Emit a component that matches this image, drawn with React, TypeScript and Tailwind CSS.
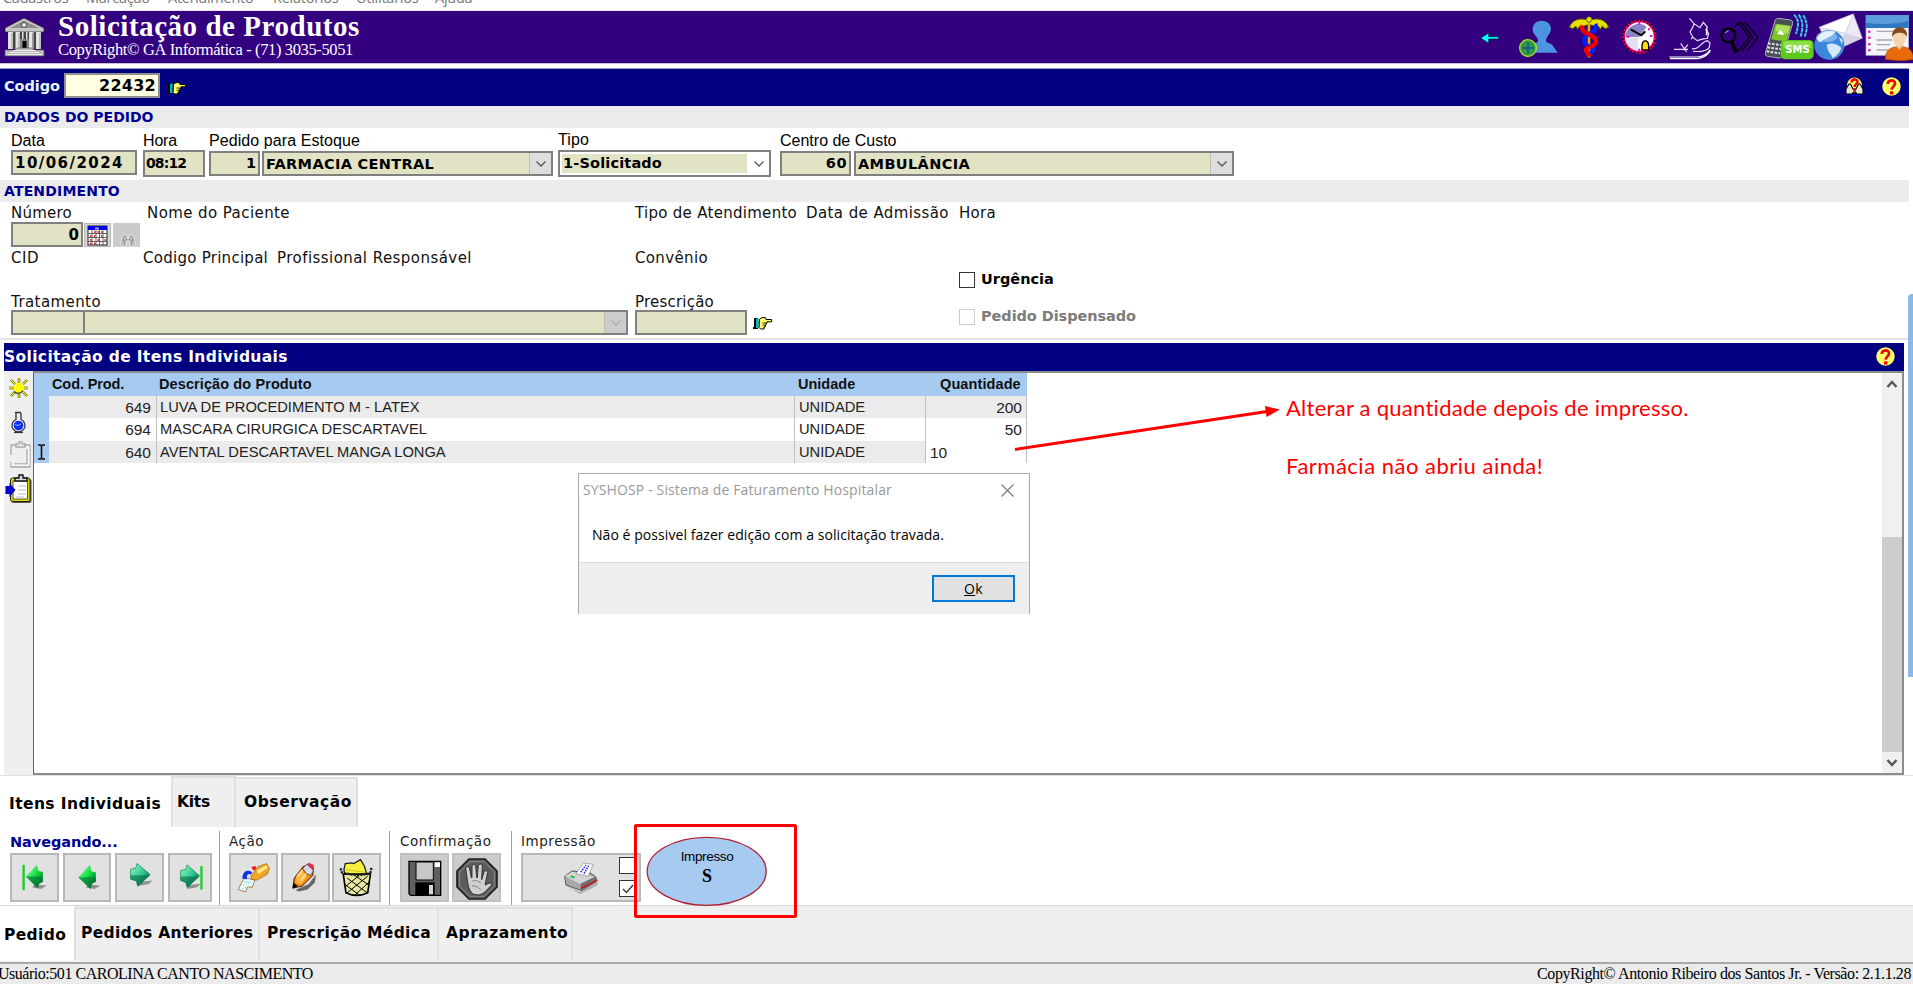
import type { ReactNode } from "react";

function T({ c = "", children }: { c?: string; children: ReactNode }) {
  return <span className={`block w-fit whitespace-nowrap ${c}`}>{children}</span>;
}

const V = "font-['DejaVu_Sans',sans-serif]";
const A = "font-['Liberation_Sans',sans-serif]";
const S = "font-['Liberation_Serif',serif]";

function Chevron({ c = "#555" }: { c?: string }) {
  return (
    <svg width="12" height="8" viewBox="0 0 12 8" fill="none" stroke={c} strokeWidth="1.3">
      <path d="M1.5 1.5 6 6l4.5-4.5" />
    </svg>
  );
}

function Help() {
  return (
    <svg width="19" height="19" viewBox="0 0 19 19">
      <circle cx="9.5" cy="9.5" r="9.2" fill="#ffff66" />
      <path d="M5.800 7C5.800 2.200 13.200 2.400 13 6.600c-.1 2.600-3.200 2.900-3.300 6" fill="none" stroke="#f00000" strokeWidth="2.600" />
      <rect x="8" y="14.300" width="3.400" height="3.200" fill="#f00000" />
    </svg>
  );
}

function HandPoint() {
  return (
    <svg width="20" height="13" viewBox="0 0 20 13">
      <path d="M1 1h4v11H0V10h1z" fill="#000" />
      <path d="M3 1.500h2.600v9.500H3z" fill="#00b8b8" />
      <path d="M6.500 2.200 9 .6h3.400l.6 1.900h5.600v2.300H14v1.400h-1v1.900h-.8V10H11v2H7.500L6 10.400z" fill="#ffff66" stroke="#000" strokeWidth="1" />
      <path d="M9.500 6h3.500M9.500 8.200h2.500" stroke="#000" strokeWidth=".8" />
    </svg>
  );
}

function Building() {
  return (
    <svg width="41" height="40" viewBox="0 0 41 40">
      <path d="M20 1 40 11v4H1v-4z" fill="#c8c8c8" stroke="#222" strokeWidth=".7" />
      <path d="M20 3.500 35 11H6z" fill="#8f8f8f" />
      <circle cx="20" cy="8" r="2.500" fill="#eee" stroke="#444" />
      <path d="M4 15h33v17H4z" fill="#444" />
      <path d="M4 15h5v17H4zM11.500 15h4.500v17h-4.500zM18 15h1.500v8H18zM22 15h1.500v8H22zM25 15h4.500v17H25zM32 15h5v17h-5z" fill="#e4e4e4" />
      <path d="M8 16v16M15 16v16M28.500 16v16M36 16v16" stroke="#999" />
      <path d="M16 22h9v10h-9z" fill="#888" />
      <path d="M18.500 24h4v9h-4z" fill="#000" />
      <path d="M1 33h10l2-2h15l2 2h10v6H1z" fill="#bdbdbd" stroke="#555" strokeWidth=".6" />
      <path d="M9 33.500h23M6 35.500h29M3 37.500h35" stroke="#f0f0f0" strokeWidth=".9" />
    </svg>
  );
}

function HeaderIcons() {
  return (
    <div className="flex h-[52px]">
      <svg width="35" height="52" viewBox="120 33 105 156">
        <path d="M122 114l24-15v11h30v7h-30v13z" fill="#00ffff" stroke="#002040" strokeWidth="2" />
      </svg>
      <svg width="51" height="52" viewBox="225 33 153 156">
        <path d="M278 88c0-34 55-34 55 0 0 8-5 12-8 18-5 8-8 12-6 20 8 4 16 4 20 12l14 20h-93c2-18 16-26 34-32 2-8-3-12-8-20-6-6-8-10-8-18z" fill="#4c94e0" />
        <circle cx="264" cy="144" r="25" fill="#2f9a44" stroke="#b4e61e" strokeWidth="4" />
        <path d="M264 127v34M247 144h34" stroke="#1c4fa0" strokeWidth="5" />
      </svg>
      <svg width="52" height="52" viewBox="378 33 156 156">
        <path d="M388 82c8-22 30-30 54-22l5 14c-14 2-18 4-20 14l-8-10-6 10-6-10-8 8z" fill="#e8e000" stroke="#5a5a00" strokeWidth="3" />
        <path d="M506 82c-8-22-30-30-54-22l-5 14c14 2 18 4 20 14l8-10 6 10 6-10 8 8z" fill="#e8e000" stroke="#5a5a00" strokeWidth="3" />
        <path d="M447 52v120" stroke="#d8b000" strokeWidth="8" />
        <path d="M466 72c14 24-38 30-34 52 2 16 30 14 28 26-2 8-16 6-13 18" fill="none" stroke="#0020ff" strokeWidth="12" />
        <path d="M428 76c-12 28 44 26 40 50-2 14-30 14-30 24 0 6 8 8 9 20" fill="none" stroke="#f00000" strokeWidth="13" />
        <circle cx="447" cy="58" r="8" fill="#e8e000" stroke="#5a5a00" strokeWidth="2" />
      </svg>
      <svg width="48" height="52" viewBox="534 33 144 156">
        <circle cx="598" cy="110" r="47" fill="#fff" stroke="#e8005c" strokeWidth="8" />
        <circle cx="598" cy="110" r="49" fill="none" stroke="#200020" strokeWidth="5" strokeDasharray="5 6" />
        <path d="M556 112a40 40 0 0 1 64-32l-20 30z" fill="#8c84c8" />
        <path d="M556 118a42 42 0 0 0 36 34l4-42z" fill="#e4e0f4" />
        <path d="M572 88l32 18 12-12" fill="none" stroke="#000" strokeWidth="6" />
        <path d="M598 66v8M560 110h8M598 146v7M630 108h7M624 88h6" stroke="#f000f0" strokeWidth="6" />
        <path d="M606 150v-14c2-18 18-18 20 0v14z" fill="#ffe000" stroke="#000" strokeWidth="4" />
      </svg>
      <svg width="52" height="52" viewBox="678 33 156 156" fill="none" stroke="#e8e0f0" strokeWidth="3.500">
        <path d="M748 55l14 16 18 12 10-16 12 14-4 8 8 12-4 14-12 2M762 72l-6 14-6 10 8 14-4 8M758 112l14 10 20-6M702 148h42M722 130l18 26M744 134l-14 16M756 146c20 6 26-20 46-24l8 6-2 14c-8 12-24 14-48 12" />
        <path d="M688 171h84c16-1 32-10 38-22M690 176h84c18-2 34-14 37-26" stroke="#fff" />
        <path d="M800 86v20" strokeWidth="5" stroke="#fff" />
      </svg>
      <svg width="44" height="52" viewBox="834 33 132 156" fill="none" stroke="#000" strokeWidth="3.500">
        <path d="M884 82l10-14 34 44-34 42-16-18M896 66l10 4 32 42-32 40M912 70l10 4 32 38-32 40" />
        <circle cx="865" cy="106" r="21" strokeWidth="7" />
        <path d="M876 126l12 32" strokeWidth="11" />
        <path d="M856 98l10-6" stroke="#c8c0e8" strokeWidth="3" />
      </svg>
      <svg width="51" height="52" viewBox="966 33 153 156" className="overflow-visible">
        <path d="M1006 60q3-6 10-5l36 5q8 2 6 10l-18 62-12 36q-4 7-12 6l-34-5q-8-2-6-10z" fill="#4a4f55" stroke="#a8b0b8" strokeWidth="3" />
        <path d="M1007 71l46 6-13 48-46-7z" fill="#7cc62c" />
        <path d="M1010 74l40 5-5 20q-20 4-40-8z" fill="#aee058" />
        <path d="M1010 102l12-12 12 15z" fill="#fff" />
        <path d="M984 130l44 6M982 142l42 6M980 154l40 6" stroke="#e0e4e8" strokeWidth="6" strokeDasharray="8 4" />
        <path d="M1062 44c18 18 12 36 6 58M1076 44c16 22 12 42 6 66M1090 46c14 24 12 42 4 64" fill="none" stroke="#38c8f0" strokeWidth="6" strokeDasharray="12 2" />
        <rect x="1022" y="120" width="99" height="58" rx="14" fill="#5cc81e" />
        <path d="M1030 124h84v20q-42 10-84 0z" fill="#8ce04c" />
        <text x="1036" y="160" textLength="73" fontSize="30" fontWeight="bold" fill="#fff" fontFamily="DejaVu Sans">SMS</text>
      </svg>
      <svg width="51" height="52" viewBox="1119 33 153 156">
        <path d="M1138 82l102-40 27 72-92 42z" fill="#eceaf4" stroke="#b8b4cc" strokeWidth="2" />
        <path d="M1138 82l78 18 24-58z" fill="#fff" stroke="#c0bcd4" strokeWidth="2" />
        <path d="M1267 114l-52-14-38 54z" fill="#d8d4e6" />
        <circle cx="1168" cy="135" r="45" fill="#3c86dc" />
        <path d="M1130 116c10-22 40-30 58-20-10 6-12 14-24 16-4 8-16 4-20 14-6 2-10-4-14-10zM1160 134c16-8 36 0 44 10-4 14-14 24-26 30-4-12-16-18-18-40zM1196 110l12 10-2 14z" fill="#d4e8fc" />
        <ellipse cx="1160" cy="110" rx="32" ry="16" fill="#fff" opacity=".35" />
      </svg>
      <svg width="49" height="52" viewBox="1272 33 147 156">
        <rect x="1278" y="46" width="128" height="120" fill="#f4f6fa" stroke="#9cb4d0" strokeWidth="2" />
        <rect x="1278" y="46" width="128" height="38" fill="#2f78c4" />
        <path d="M1278 46h128v16q-60 16-128 6z" fill="#5c9cdc" />
        <path d="M1310 94h60M1310 120h46M1310 134h40M1310 150h36" stroke="#a8a8b0" strokeWidth="4" />
        <path d="M1288 92v6M1288 110v6M1288 130v6M1288 148v6" stroke="#d800b0" strokeWidth="7" />
        <path d="M1336 178c0-30 18-38 44-38s40 10 40 38q-42 8-84 0z" fill="#e86c0c" stroke="#a84400" strokeWidth="2" />
        <path d="M1366 134l12 16 14-16z" fill="#f0c8a0" />
        <ellipse cx="1378" cy="114" rx="19" ry="25" fill="#f6d4b0" />
        <path d="M1357 112c-6-40 50-40 44 0-4-12-14-14-22-14s-18 2-22 14z" fill="#8a4a20" />
      </svg>
    </div>
  );
}

const beige = "bg-[#e2e2c4] border-2 border-[#808080]";

function Menu() {
  const m = "text-[#777] text-[14.500px] leading-[20px] tracking-[-0.260px] font-['Open_Sans',sans-serif]";
  return (
    <div className="flex h-[11px] overflow-hidden border-b border-[#e8e8e8] bg-white">
      <div className="-mt-[12px] flex h-[20px] pl-[3px]">
        <div className="w-[83px]"><T c={m}>Cadastros</T></div>
        <div className="w-[82px]"><T c={m}>Marcação</T></div>
        <div className="w-[105px]"><T c={m}>Atendimento</T></div>
        <div className="w-[83px]"><T c={m}>Relatórios</T></div>
        <div className="w-[79px]"><T c={m}>Utilitários</T></div>
        <T c={m}>Ajuda</T>
      </div>
    </div>
  );
}

function Header() {
  return (
    <>
      <div className="flex h-[53px] justify-between border-b border-[#c8c0d8] bg-[#330080]">
        <div className="flex pl-[4px]">
          <div className="pt-[6px]"><Building /></div>
          <div className="flex flex-col pt-[1px] pl-[13px] text-white">
            <T c={`${S} font-bold text-[29px] leading-[28px] tracking-[0.540px]`}>Solicitação de Produtos</T>
            <T c={`${S} text-[16.500px] leading-[20px] tracking-[-0.380px]`}>CopyRight© GÁ Informática - (71) 3035-5051</T>
          </div>
        </div>
        <HeaderIcons />
      </div>
      <div className="mt-[4px] flex h-[38px] w-[1909px] items-start border-t border-[#a0a0c8] bg-[#000080]">
        <T c={`${V} ml-[4px] mt-[7px] w-[56px] font-bold text-[14.500px] leading-[20px] tracking-[-0.050px] text-[#e8f4ff]`}>Codigo</T>
        <div className="ml-[4px] mt-[4px] flex h-[25px] w-[96px] justify-end border-2 border-[#909090] bg-[#ffffe1] pr-[2px]">
          <T c={`${V} font-bold text-[16px] leading-[21px] tracking-[0.270px]`}>22432</T>
        </div>
        <div className="ml-[7px] mt-[13px]"><HandPoint /></div>
        <div className="ml-auto mt-[8px] flex gap-[18px] pr-[8px]">
          <svg width="19" height="19" viewBox="0 0 19 19">
            <circle cx="9.5" cy="8" r="7.500" fill="#ffff66" />
            <path d="M1 17v-5l3-5 1.500 0 2.500 5h3l2.500-5H15l3 5v5h-6l-1.500-2h-2L7 17z" fill="#e8e8d0" stroke="#000" strokeWidth="1.100" />
            <path d="M2 18.500h15" stroke="#0000e0" />
            <path d="M6.500 5.500C6.500 1.500 12.500 1.500 12.500 5c0 2-2.800 2-2.800 5" fill="none" stroke="#f00000" strokeWidth="2.400" />
            <rect x="8.300" y="11.500" width="2.800" height="2.600" fill="#f00000" />
          </svg>
          <Help />
        </div>
      </div>
    </>
  );
}

const ms = `${A} text-[16px] leading-[22px] text-black`;
const vd = `${V} text-[15px] leading-[23px] text-[#111]`;

function Combo({ c, btn, ch, children }: { c: string; btn: string; ch?: string; children?: ReactNode }) {
  return (
    <div className={`flex justify-between ${beige} ${c}`}>
      <div>{children}</div>
      <div className={`flex w-[22px] items-center justify-center border-l border-[#c0c0b0] ${btn}`}><Chevron c={ch} /></div>
    </div>
  );
}

const fb = `${V} font-bold text-[14.500px]`;

function Dados() {
  return (
    <div className="w-[1909px]">
      <div className="h-[22px] bg-[#ebebeb] pl-[4px]">
        <T c={`${V} font-bold text-[14px] leading-[23px] text-[#000090]`}>DADOS DO PEDIDO</T>
      </div>
      <div className="flex h-[52px] pt-[2px] pl-[11px]">
        <div className="flex w-[126px] flex-col">
          <div className="h-[20px]"><T c={ms}>Data</T></div>
          <div className={`h-[25px] pl-[2px] ${beige}`}><T c={`${V} font-bold text-[15px] leading-[22px] tracking-[1.450px]`}>10/06/2024</T></div>
        </div>
        <div className="ml-[6px] flex w-[62px] flex-col">
          <div className="h-[20px]"><T c={`${ms} tracking-[-0.170px]`}>Hora</T></div>
          <div className={`h-[27px] pl-[1px] ${beige}`}><T c={`${V} font-bold text-[14px] leading-[22px] tracking-[-0.900px]`}>08:12</T></div>
        </div>
        <div className="ml-[4px] flex w-[344px] flex-col">
          <div className="h-[21px]"><T c={`${ms} tracking-[0.080px]`}>Pedido para Estoque</T></div>
          <div className="flex gap-[2px]">
            <div className={`flex h-[25px] w-[51px] justify-end pr-[2px] ${beige}`}><T c={`${fb} leading-[21px]`}>1</T></div>
            <Combo c="h-[25px] w-[291px] pl-[2px]" btn="bg-[#dedede]"><T c={`${fb} leading-[23px] tracking-[0.330px]`}>FARMACIA CENTRAL</T></Combo>
          </div>
        </div>
        <div className="ml-[5px] flex w-[213px] flex-col">
          <div className="h-[20px]"><T c={`${ms} -mt-px tracking-[0.120px]`}>Tipo</T></div>
          <div className="flex h-[27px] justify-between border-2 border-[#808080] bg-white py-[2px] pl-[2px] pr-[4px]">
            <div className="flex w-[185px] bg-[#e2e2c4] pl-px"><T c={`${fb} leading-[18px] tracking-[0.160px]`}>1-Solicitado</T></div>
            <div className="flex items-center"><Chevron /></div>
          </div>
        </div>
        <div className="ml-[9px] flex w-[454px] flex-col">
          <div className="h-[21px]"><T c={ms}>Centro de Custo</T></div>
          <div className="flex gap-[3px]">
            <div className={`flex h-[25px] w-[71px] justify-end pr-[2px] ${beige}`}><T c={`${fb} leading-[21px] tracking-[0.500px]`}>60</T></div>
            <Combo c="h-[25px] w-[380px] pl-[2px]" btn="bg-[#dedede]"><T c={`${fb} leading-[23px] tracking-[0.370px]`}>AMBULÂNCIA</T></Combo>
          </div>
        </div>
      </div>
    </div>
  );
}

function Calendar() {
  return (
    <svg width="27" height="24" viewBox="0 0 27 24">
      <rect x=".5" y=".5" width="26" height="23" fill="#d4d4d4" stroke="#b8b8b8" />
      <rect x="4" y="3" width="19" height="19" fill="#fff" stroke="#222" />
      <rect x="4" y="3" width="19" height="4" fill="#0000e8" />
      <rect x="11" y="4.500" width="4" height="2" fill="#aaa" />
      <path d="M4 10.500h19M4 14.500h19M4 18.500h19M8 7v15M12 7v15M15.500 7v15M19 7v15" stroke="#444" strokeWidth=".8" />
      <path d="M10 9h1.500M13.500 9H15M17 9h1.500M6 13h1.500M10 13h1.500M17 13h1.500M6 17h1.500M13.500 17H15M20.500 17H22M6 20.500h1.500M10 20.500h1.500" stroke="#e00000" strokeWidth="1.700" />
    </svg>
  );
}

function Binoculars() {
  return (
    <svg width="27" height="24" viewBox="0 0 27 24">
      <rect width="27" height="24" fill="#cbcbcb" />
      <path d="M8 23v-5l2.500-6h3l1 4h1l1-4h3l2.500 6v5h-5v-5h-4v5z" fill="#9a9a9a" stroke="#f4f4f4" strokeWidth=".8" />
      <path d="M10 18v4M12 14v3M18 14v3M20 18v4" stroke="#e8e8e8" />
    </svg>
  );
}

function Atendimento() {
  return (
    <div className="w-[1909px]">
      <div className="h-[22px] bg-[#ebebeb] pl-[4px]">
        <T c={`${V} font-bold text-[14px] leading-[23px] tracking-[0.170px] text-[#000090]`}>ATENDIMENTO</T>
      </div>
      <div className="flex h-[136px] pl-[11px]">
        <div className="flex w-[948px] flex-col">
          <div className="flex h-[20px]">
            <div className="w-[136px]"><T c={`${vd} tracking-[0.230px]`}>Número</T></div>
            <div className="w-[488px]"><T c={`${vd} tracking-[0.420px]`}>Nome do Paciente</T></div>
            <div className="w-[171px]"><T c={`${vd} tracking-[0.290px]`}>Tipo de Atendimento</T></div>
            <T c={`${vd} tracking-[0.410px]`}>Data de Admissão</T>
          </div>
          <div className="flex h-[25px]">
            <div className={`flex w-[72px] justify-end pr-[2px] ${beige}`}><T c={`${V} font-bold text-[15px] leading-[22px]`}>0</T></div>
            <div className="ml-px mt-px"><Calendar /></div>
            <div className="ml-[2px] mt-px"><Binoculars /></div>
          </div>
          <div className="flex h-[44px]">
            <div className="w-[132px]"><T c={`${vd} tracking-[0.500px]`}>CID</T></div>
            <div className="w-[134px]"><T c={`${vd} tracking-[0.270px]`}>Codigo Principal</T></div>
            <div className="w-[358px]"><T c={`${vd} tracking-[0.450px]`}>Profissional Responsável</T></div>
            <T c={`${vd} tracking-[0.360px]`}>Convênio</T>
          </div>
          <div className="flex h-[19px]">
            <div className="w-[624px]"><T c={`${vd} tracking-[0.420px]`}>Tratamento</T></div>
            <T c={`${vd} tracking-[0.210px]`}>Prescrição</T>
          </div>
          <div className="flex h-[25px]">
            <div className={`w-[73px] ${beige} border-r-[1px]`} />
            <Combo c="w-[544px] border-l-[1px]" btn="bg-[#cdcdcd]" ch="#aaa" />
            <div className={`ml-[7px] w-[112px] ${beige}`} />
            <div className="ml-[6px] mt-[7px]"><HandPoint /></div>
          </div>
        </div>
        <div className="flex flex-col">
          <T c={`${vd} tracking-[0.300px]`}>Hora</T>
          <div className="mt-[43px] flex items-center gap-[6px]">
            <div className="h-[16px] w-[16px] border-[1.500px] border-[#333] bg-white" />
            <T c={`${V} font-bold text-[14.500px] leading-[23px]`}>Urgência</T>
          </div>
          <div className="mt-[14px] flex items-center gap-[6px]">
            <div className="h-[16px] w-[16px] border-[1.500px] border-[#ccc] bg-white" />
            <T c={`${V} font-bold text-[14.500px] leading-[23px] tracking-[-0.070px] text-[#7c7c7c]`}>Pedido Dispensado</T>
          </div>
        </div>
      </div>
    </div>
  );
}

function SideTools() {
  return (
    <div className="flex w-[29px] flex-col bg-[#efefef]">
      <svg width="29" height="140" viewBox="4 371 29 140">
        <path d="M19 378v6M19 392v6M9 388h5M24 388h4M11 380l4 4M27 380l-4 4M11 396l4-4M27 396l-4-4" stroke="#222" strokeWidth="2.400" />
        <path d="M19 378v6M19 392v6M9 388h5M24 388h4M11 380l4 4M27 380l-4 4M11 396l4-4M27 396l-4-4" stroke="#ffff00" strokeWidth="1.300" />
        <circle cx="19" cy="388" r="5.200" fill="#ffff00" />
        <path d="M14 391.500q5 4 9-1" fill="none" stroke="#333" strokeWidth="1.200" />
        <path d="M15 412.500h6M16 413v6.500a6.500 6.500 0 1 0 5 0V413" fill="#e8f0ff" stroke="#333" strokeWidth="1.300" />
        <circle cx="18.500" cy="425.500" r="4.800" fill="#1030f0" />
        <path d="M15 424.500l3 1 3-1.500" stroke="#80c0ff" fill="none" />
        <path d="M14 432.500h9" stroke="#333" strokeWidth="1.200" />
        <path d="M16 445h-5v10M11 462v5h19v-22h-6M16 447v-3h3v-2h3v2h3v3zM14 464h13v-15" fill="none" stroke="#aaa" strokeWidth="1.300" />
        <path d="M12 463v3M29 446v19H13" stroke="#fff" fill="none" />
        <rect x="11.500" y="479" width="20" height="24" rx="2" fill="#555" />
        <rect x="10.500" y="478" width="19.500" height="23.500" rx="2" fill="#e0d800" stroke="#222" />
        <rect x="13" y="481" width="14.500" height="18" fill="#fff" stroke="#333" strokeWidth=".8" />
        <path d="M15 481v-3h4v-3h4v3h4v3z" fill="#ddd" stroke="#111" strokeWidth="1.400" />
        <path d="M18 486h8M18 490h8M18 494h8M16 497h8" stroke="#bbb" strokeWidth="1.200" />
        <path d="M5.500 486h4v-3l6 7-6 7v-3h-4z" fill="#0000c8" />
      </svg>
    </div>
  );
}

const hd = `${A} font-bold text-[14.500px] leading-[22px] text-[#111]`;
const td = `${A} text-[14.700px] leading-[23px] text-[#222]`;
const num = `${A} text-[15.500px] leading-[23px] text-[#222]`;
const rows = [
  { id: "649", d: "LUVA DE PROCEDIMENTO M - LATEX", q: "200" },
  { id: "694", d: "MASCARA CIRURGICA DESCARTAVEL", q: "50" },
  { id: "640", d: "AVENTAL DESCARTAVEL MANGA LONGA", q: "10" },
];

function Grid() {
  return (
    <div className="ml-[4px] w-[1900px]">
      <div className="flex h-[28px] items-start justify-between bg-[#000080] pr-[9px]">
        <T c={`${V} font-bold text-[15.500px] leading-[29px] tracking-[0.350px] text-white`}>Solicitação de Itens Individuais</T>
        <div className="mt-[4px]"><Help /></div>
      </div>
      <div className="flex h-[404px]">
        <SideTools />
        <div className="flex flex-1 justify-between border-l border-t-2 border-r-2 border-b-2 border-[#8c8c8c] border-l-[#606060] bg-white">
          <div className="w-[993px]">
            <div className="flex h-[22.500px] bg-[#a6caf0]">
              <div className="w-[18px]" />
              <div className="w-[107px]"><T c={`${hd} tracking-[-0.100px]`}>Cod. Prod.</T></div>
              <div className="w-[639px]"><T c={`${hd} tracking-[0.100px]`}>Descrição do Produto</T></div>
              <div className="w-[142px]"><T c={hd}>Unidade</T></div>
              <T c={`${hd} tracking-[0.100px]`}>Quantidade</T>
            </div>
            {rows.map((r, i) => (
              <div key={r.id} className="flex h-[22.500px]">
                <div className="flex w-[15px] justify-center bg-[#a6caf0]">
                  {i === 2 && (
                    <svg width="9" height="16" viewBox="0 0 9 16" className="mt-[3px]" fill="none" stroke="#111" strokeWidth="1.600">
                      <path d="M1 1h2.500l1 1 1-1H8M4.500 2v12M1 15h2.500l1-1 1 1H8" />
                    </svg>
                  )}
                </div>
                <div className={`flex flex-1 ${i % 2 ? "bg-white" : "bg-[#ebebeb]"}`}>
                  <div className="flex w-[108px] justify-end border-r border-[#c0c0c0] pr-[5px]"><T c={num}>{r.id}</T></div>
                  <div className="w-[638px] border-r border-[#c0c0c0] pl-[3px]"><T c={td}>{r.d}</T></div>
                  <div className="w-[131px] border-r border-[#c0c0c0] pl-[4px]"><T c={td}>UNIDADE</T></div>
                  <div className={`flex flex-1 border-r border-[#c0c0c0] ${i === 2 ? "bg-white pl-[4px]" : "justify-end pr-[4px]"}`}>
                    <T c={num}>{r.q}</T>
                  </div>
                </div>
              </div>
            ))}
          </div>
          <div className="flex w-[20px] flex-col items-center bg-[#f0f0f0]">
            <svg width="12" height="10" viewBox="0 0 12 10" className="mt-[6px]"><path d="M1.500 8 6 3l4.500 5" fill="none" stroke="#555" strokeWidth="2.400" /></svg>
            <div className="mt-[148px] h-[215px] w-[20px] bg-[#cdcdcd]" />
            <svg width="12" height="10" viewBox="0 0 12 10" className="mt-[6px]"><path d="M1.500 2 6 7l4.500-5" fill="none" stroke="#555" strokeWidth="2.400" /></svg>
          </div>
        </div>
      </div>
    </div>
  );
}

const tb = `${V} font-bold text-[15.500px] leading-[22px] text-black`;

function ItemTabs() {
  return (
    <div className="flex h-[53px] items-start border-t border-[#e0e0e0]">
      <div className="w-[171px] pl-[9px] pt-[17px]"><T c={`${tb} tracking-[0.410px]`}>Itens Individuais</T></div>
      <div className="h-[51px] w-[65px] border-2 border-b-0 border-[#e0e0e0] bg-[#efefef] pl-[4px] pt-[13px]"><T c={`${tb} tracking-[-0.240px]`}>Kits</T></div>
      <div className="mt-px h-[50px] w-[122px] border-2 border-b-0 border-l-0 border-[#e0e0e0] bg-[#efefef] pl-[8px] pt-[12px]"><T c={`${tb} tracking-[0.550px]`}>Observação</T></div>
    </div>
  );
}

function GreenArrow({ x, kind }: { x: number; kind: "first" | "prev" | "next" | "last" }) {
  const w = kind === "last" ? 132 : 147;
  return (
    <svg width={w / 3 - 1.3} height="45" viewBox={`${x + 3} 284 ${w - 4} 138`} className="block">
      <defs>
        <linearGradient id={`g${kind}`} x1="0" y1="0" x2="1" y2="1">
          <stop offset="0" stopColor="#a0ffc0" />
          <stop offset=".5" stopColor={kind === "next" || kind === "last" ? "#30c890" : "#10e040"} />
          <stop offset="1" stopColor="#004828" />
        </linearGradient>
      </defs>
      {kind === "first" && (
        <g>
          <path d="M100 374l38 4-18 10-26-4z" fill="#909090" />
          <path d="M67 314v78" stroke="#10d020" strokeWidth="7" />
          <path d="M74 350l34-36 4 18 14 4v30l-12 6-4 14z" fill={`url(#g${kind})`} />
          <path d="M74 350h52v16l-12 6-4 14z" fill="#007838" opacity=".65" />
        </g>
      )}
      {kind === "prev" && (
        <g>
          <path d="M258 374l40 4-18 10-26-4z" fill="#909090" />
          <path d="M230 352l36-38 4 20 14 4v28l-12 6-4 16z" fill={`url(#g${kind})`} />
          <path d="M230 352h54v14l-12 6-4 16z" fill="#007838" opacity=".65" />
        </g>
      )}
      {kind === "next" && (
        <g>
          <path d="M420 366l36-4-14 12-28 4z" fill="#909090" />
          <path d="M388 328l16-4 4-14 40 34-38 36-4-16-18-6z" fill={`url(#g${kind})`} stroke="#007848" strokeWidth="2" />
          <path d="M388 346h60l-38 34-4-16-18-6z" fill="#006840" opacity=".55" />
        </g>
      )}
      {kind === "last" && (
        <g>
          <path d="M562 376l40-4-16 12-28 4z" fill="#909090" />
          <path d="M538 332l16-4 4-14 38 34-38 36-4-16-16-6z" fill={`url(#g${kind})`} stroke="#007848" strokeWidth="2" />
          <path d="M538 350h58l-38 34-4-16-16-6z" fill="#006840" opacity=".55" />
          <path d="M602 318v72" stroke="#10d020" strokeWidth="7" />
        </g>
      )}
    </svg>
  );
}

const btn = "h-[49px] border-2 border-[#b8b8b8] bg-[#e1e1e1]";
const dis = "h-[49px] border-2 border-[#c0c0c0] bg-[#cbcbcb]";
const gl = `${V} text-[13.500px] leading-[20px] tracking-[0.550px] text-[#222]`;

function Toolbar() {
  return (
    <div className="flex h-[77px] pt-[3px]">
      <div className="flex w-[210px] flex-col pl-[10px]">
        <div className="h-[22px]"><T c={`${V} font-bold text-[14.500px] leading-[22px] tracking-[-0.080px] text-[#000090]`}>Navegando...</T></div>
        <div className="flex gap-[4px]">
          <div className={`${btn} w-[49px] shrink-0`}><GreenArrow x={30} kind="first" /></div>
          <div className={`${btn} w-[48px] shrink-0`}><GreenArrow x={188} kind="prev" /></div>
          <div className={`${btn} w-[49px] shrink-0`}><GreenArrow x={345} kind="next" /></div>
          <div className={`${btn} w-[44px] shrink-0`}><GreenArrow x={504} kind="last" /></div>
        </div>
      </div>
      <div className="ml-[9px] w-px bg-[#a0a0a0]" />
      <div className="flex w-[160px] flex-col pl-[9px]">
        <div className="h-[22px]"><T c={gl}>Ação</T></div>
        <div className="flex gap-[2.500px]">
          <div className={`${btn} w-[49px] shrink-0`}>
            <svg width="45" height="45" viewBox="692 286 136 136">
              <path d="M714 390l18-36 32 8-8 22-14-2-6 16z" fill="#f0fcff" stroke="#a08050" strokeWidth="3" />
              <path d="M728 378l22-10M732 366l20 2M726 388l14-6" stroke="#40d0e8" strokeWidth="3" strokeDasharray="4 4" />
              <path d="M726 356c2-22 16-28 30-18l-4 8c-8-6-14 0-12 14z" fill="#1030e8" />
              <path d="M756 322l8 10M764 320v8" stroke="#e81010" strokeWidth="6" />
              <path d="M752 352l20-30 28-10 8 14-6 18-32 18-14-2z" fill="#f0a820" stroke="#9a6400" strokeWidth="2" />
              <path d="M770 332l28-14 6 6-30 20z" fill="#ffe890" />
            </svg>
          </div>
          <div className={`${btn} w-[49px] shrink-0`}>
            <svg width="45" height="45" viewBox="846 286 136 136">
              <path d="M884 392l40-18 22-30-4 26-22 20-26 6z" fill="#666" />
              <path d="M876 386l4-30 26-34 20-10 12 12-2 24-32 32z" fill="#f08c10" stroke="#401800" strokeWidth="3" />
              <path d="M886 350l16-20 16 22-18 24-14-6z" fill="#ffb840" />
              <path d="M890 350l14-18M900 362l16-20" stroke="#ffe4a0" strokeWidth="5" />
              <path d="M906 326l12-12 20 18-8 16-14-6z" fill="#d8d8e8" stroke="#333" strokeWidth="2" />
              <path d="M918 313l8-3 13 6-1 18z" fill="#e03050" />
              <path d="M875 388l2-18 14 10z" fill="#000" />
            </svg>
          </div>
          <div className={`${btn} w-[49px] shrink-0`}>
            <svg width="45" height="45" viewBox="1000 286 136 136">
              <path d="M1030 330l4-18 20-2 6 2 20-12 12 20 8 28h-66z" fill="#f4f040" stroke="#222" strokeWidth="4" />
              <path d="M1028 344l8 56q32 16 66 0l8-56z" fill="#e8e8a0" stroke="#000" strokeWidth="5" />
              <path d="M1040 356l60 44M1066 350l38 26M1034 376l44 32M1102 350l-62 50M1074 350l-38 30M1108 366l-44 40" stroke="#000" strokeWidth="3" fill="none" />
              <path d="M1022 326q-4 8 4 14l44 8 38-6q6-8 4-18" fill="none" stroke="#222" strokeWidth="7" strokeDasharray="7 3" />
              <path d="M1036 330l56 8" stroke="#c0b800" strokeWidth="2" />
            </svg>
          </div>
        </div>
      </div>
      <div className="ml-[9px] w-px bg-[#a0a0a0]" />
      <div className="flex w-[111px] flex-col pl-[10px]">
        <div className="h-[22px]"><T c={gl}>Confirmação</T></div>
        <div className="flex gap-[3px]">
          <div className={`${dis} w-[49px] shrink-0`}>
            <svg width="45" height="45" viewBox="66 164 135 135">
              <path d="M87 183h95v102h-90l-5-5z" fill="#606060" stroke="#000" strokeWidth="4" />
              <rect x="108" y="185" width="52" height="54" fill="#c8c8c8" stroke="#000" strokeWidth="3" />
              <rect x="164" y="186" width="16" height="14" fill="#fff" />
              <rect x="106" y="246" width="58" height="38" fill="#000" />
              <rect x="147" y="254" width="12" height="28" fill="#d8d8d8" />
            </svg>
          </div>
          <div className={`${dis} w-[49px] shrink-0`}>
            <svg width="45" height="45" viewBox="221 164 135 135">
              <path d="M266 176h48l36 36v48l-36 36h-48l-36-36v-48z" fill="#5c5c5c" stroke="#1c1c1c" strokeWidth="5" />
              <path d="M269 184h42l31 31v42l-31 31h-42l-31-31v-42z" fill="none" stroke="#8a8a8a" strokeWidth="3" />
              <path d="M256 202q6-6 11 0l6 30h2v-36q6-8 11 0l3 36h2l3-38q6-6 12 0l-2 44 8-26q8-4 10 4l-8 38 14-6q10 0 6 6l-24 24q-12 10-30 4-14-8-18-36z" fill="#d0d0d0" stroke="#222" strokeWidth="2.500" />
              <path d="M276 242q14-6 26 6M274 256q18 0 28 12" fill="none" stroke="#888" strokeWidth="3" />
            </svg>
          </div>
        </div>
      </div>
      <div className="ml-[10px] w-px bg-[#a0a0a0]" />
      <div className="flex flex-col pl-[9px]">
        <div className="h-[22px]"><T c={gl}>Impressão</T></div>
        <div className={`${btn} flex w-[120px] justify-between`}>
          <svg width="45" height="45" viewBox="536 166 135 135" className="ml-[35px]">
            <path d="M560 258l42 20 56-36-6 16-50 26z" fill="#909090" opacity=".6" />
            <path d="M556 230l22-16 52 4 20 14v14l-46 26-44-16z" fill="#a8a8a8" stroke="#555" strokeWidth="3" />
            <path d="M556 230l22-14 70 16-46 20z" fill="#d4d4d4" />
            <path d="M604 252v24l46-28v-18z" fill="#707070" />
            <path d="M604 266l34-16 16-10" stroke="#e00010" strokeWidth="4" fill="none" />
            <path d="M590 222l22-32 30 4-16 36z" fill="#fff" stroke="#888" strokeWidth="2" />
            <path d="M604 218l16-22M614 222l14-24" stroke="#3030f0" strokeWidth="5" strokeDasharray="5 3" />
            <path d="M574 230l12 3" stroke="#10c030" strokeWidth="5" />
          </svg>
          <div className="mr-[3px] mt-[2px] flex flex-col gap-[6px]">
            <div className="h-[17px] w-[17px] border-[1.500px] border-[#333] bg-white" />
            <div className="flex h-[17px] w-[17px] items-center justify-center border-[1.500px] border-[#333] bg-white">
              <svg width="12" height="10" viewBox="0 0 12 10"><path d="M1 5l3.500 3.500L11 1" fill="none" stroke="#333" strokeWidth="1.300" /></svg>
            </div>
          </div>
        </div>
      </div>
    </div>
  );
}

function PageTabs() {
  return (
    <div className="flex h-[57px] items-start border-t border-[#d8d8d8] bg-[#efefef]">
      <div className="h-[55px] w-[74px] bg-white pl-[4px] pt-[18px]"><T c={`${tb} tracking-[0.350px]`}>Pedido</T></div>
      <div className="mt-px flex h-[53px] border-t-2 border-[#e0e0e0]">
        <div className="w-[184px] border-x-2 border-[#e0e0e0] border-r-0 pl-[5px] pt-[13px]"><T c={`${tb} tracking-[0.320px]`}>Pedidos Anteriores</T></div>
        <div className="w-[179px] border-l-2 border-[#e0e0e0] pl-[7px] pt-[13px]"><T c={`${tb} tracking-[0.320px]`}>Prescrição Médica</T></div>
        <div className="w-[136px] border-x-2 border-[#e0e0e0] pl-[7px] pt-[13px]"><T c={`${tb} tracking-[0.530px]`}>Aprazamento</T></div>
      </div>
    </div>
  );
}

function Dialog() {
  const o = "font-['Open_Sans',sans-serif] text-[14px]";
  return (
    <div className="absolute left-[578px] top-[473px] flex h-[141px] w-[452px] flex-col border border-b-0 border-[#a8a8a8] bg-white">
      <div className="flex h-[32px] justify-between pl-[4px] pr-[15px]">
        <T c={`${o} leading-[31px] tracking-[0.130px] text-[#999]`}>SYSHOSP - Sistema de Faturamento Hospitalar</T>
        <svg width="13" height="13" viewBox="0 0 13 13" className="mt-[10px]"><path d="M.5.5l12 12M12.500.5l-12 12" stroke="#777" strokeWidth="1.100" /></svg>
      </div>
      <div className="h-[56px] pl-[13px] pt-[17px]">
        <T c={`${o} leading-[24px] tracking-[0.060px] text-black`}>Não é possivel fazer edição com a solicitação travada.</T>
      </div>
      <div className="flex flex-1 items-start justify-end border-t border-[#dcdcdc] bg-[#efefef] pr-[14px] pt-[12px]">
        <div className="flex h-[27px] w-[83px] items-center justify-center border-[2.500px] border-[#0078d7] bg-[#e1e1e1]">
          <T c={`${o} leading-[20px] tracking-[0.300px]`}><span className="underline">O</span>k</T>
        </div>
      </div>
    </div>
  );
}

const red = "font-['Lato',sans-serif] text-[22px] leading-[28px] text-[#f00]";

export default function App() {
  return (
    <div className="relative flex h-[984px] w-[1913px] flex-col overflow-hidden bg-white">
      <Menu />
      <Header />
      <Dados />
      <Atendimento />
      <div className="mb-[3px] h-[2px] bg-[#e4e4e4]" />
      <Grid />
      <ItemTabs />
      <Toolbar />
      <PageTabs />
      <div className="flex flex-1 justify-between border-t-2 border-[#a8a8a8] bg-[#ebebeb] pr-[2px]">
        <T c={`${S} -ml-[2px] text-[16px] leading-[20px] tracking-[-0.470px]`}>Usuário:501 CAROLINA CANTO NASCIMENTO</T>
        <T c={`${S} text-[16px] leading-[20px] tracking-[-0.410px]`}>CopyRight© Antonio Ribeiro dos Santos Jr. - Versão: 2.1.1.28</T>
      </div>
      <div className="absolute left-[1286px] top-[394px] flex flex-col gap-[30px]">
        <T c={`${red} tracking-[0.270px]`}>Alterar a quantidade depois de impresso.</T>
        <T c={`${red} tracking-[0.500px]`}>Farmácia não abriu ainda!</T>
      </div>
      <Dialog />
      <svg className="absolute left-[1010px] top-[400px]" width="275" height="55" viewBox="1010 400 275 55">
        <path d="M1015 449.500l252-38" stroke="#f00" strokeWidth="3" />
        <path d="M1280 409.500l-13.500 7.500-1.500-11z" fill="#f00" />
      </svg>
      <div className="absolute left-[634px] top-[824px] h-[94px] w-[163px] rounded-[2px] border-[3px] border-[#f00]">
        <svg width="157" height="88" viewBox="637 827 157 88">
          <ellipse cx="706.700" cy="871.300" rx="59.500" ry="34" fill="#a6caf0" stroke="#b02030" strokeWidth="1.300" />
        </svg>
      </div>
      <div className="absolute left-[646px] top-[847px] flex w-[122px] flex-col items-center">
        <T c={`${A} text-[13.500px] leading-[20px] tracking-[-0.350px]`}>Impresso</T>
        <T c={`${S} font-bold text-[18px] leading-[18px]`}>S</T>
      </div>
      <div className="absolute left-[1908px] top-[294px] h-[383px] w-[5px] rounded-tl-[4px] bg-[#8ab8ea]" />
    </div>
  );
}
